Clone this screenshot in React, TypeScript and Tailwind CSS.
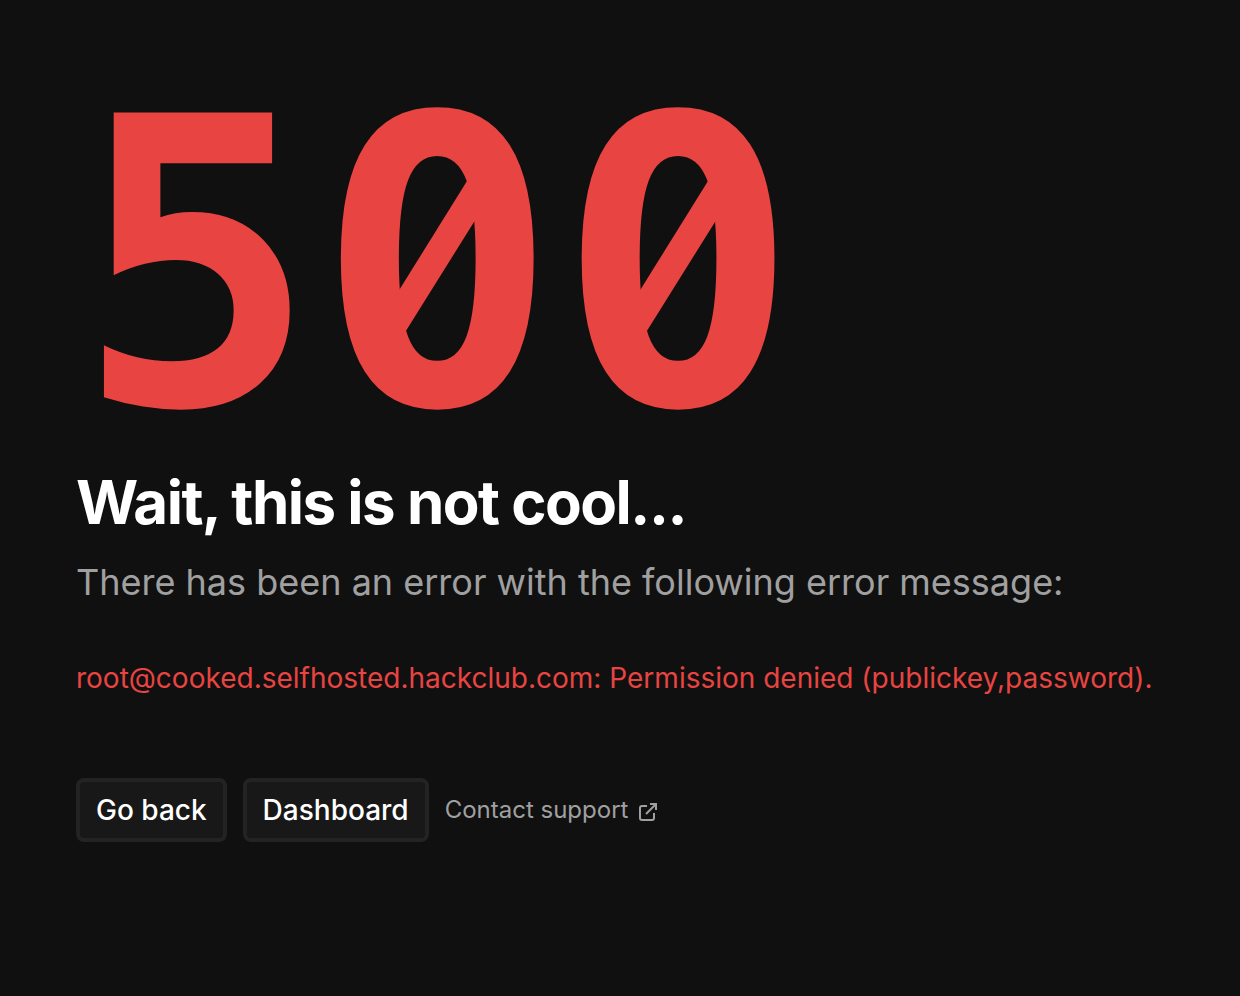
const errorMessage =
  "root@cooked.selfhosted.hackclub.com: Permission denied (publickey,password).";

const buttonClass =
  "h-16 rounded-lg border-4 border-[#232323] bg-[#181818] px-4 text-[28px] font-medium text-white";

// Horizontal offset of each zero's slash
const zeroOffsets = [0, 241];

function ErrorCode() {
  return (
    <p className="relative font-['DejaVu_Sans_Mono',monospace] text-[400px] leading-[400px] font-bold text-[#e84441]">
      500
      <svg
        aria-hidden
        viewBox="0 0 722 400"
        className="pointer-events-none absolute inset-0 size-full"
      >
        {zeroOffsets.map((x) => (
          <g key={x} transform={`translate(${x} 0)`}>
            <circle cx="361" cy="192" r="26" fill="#101010" />
            <polygon points="397,105 404,146 324,274 318,232" fill="currentColor" />
          </g>
        ))}
      </svg>
    </p>
  );
}

function ExternalIcon() {
  return (
    <svg
      aria-hidden
      viewBox="0 0 24 24"
      className="mt-1 size-6"
      fill="none"
      stroke="currentColor"
      strokeWidth="2"
    >
      <path d="M11 6H6a2 2 0 0 0-2 2v10a2 2 0 0 0 2 2h10a2 2 0 0 0 2-2v-5" />
      <path d="M14 4h6v6M20 4L10 14" />
    </svg>
  );
}

export default function App() {
  return (
    <main className="flex min-h-screen flex-col items-start bg-[#101010] px-[76px] pt-[66px] font-['Inter',sans-serif]">
      <ErrorCode />
      <h1 className="text-[60px] leading-[72px] font-bold tracking-tight text-white">
        Wait, this is not cool...
      </h1>
      <p className="mt-4 text-[36px] leading-[56px] text-[#a0a0a0]">
        There has been an error with the following error message:
      </p>
      <p className="mt-12 text-[28px] leading-[40px] text-[#e84441]">{errorMessage}</p>
      <div className="mt-20 flex items-center gap-4">
        <button type="button" className={buttonClass}>
          Go back
        </button>
        <button type="button" className={buttonClass}>
          Dashboard
        </button>
        <a href="#support" className="flex items-center gap-2 text-[24px] text-[#a0a0a0]">
          Contact support
          <ExternalIcon />
        </a>
      </div>
    </main>
  );
}
